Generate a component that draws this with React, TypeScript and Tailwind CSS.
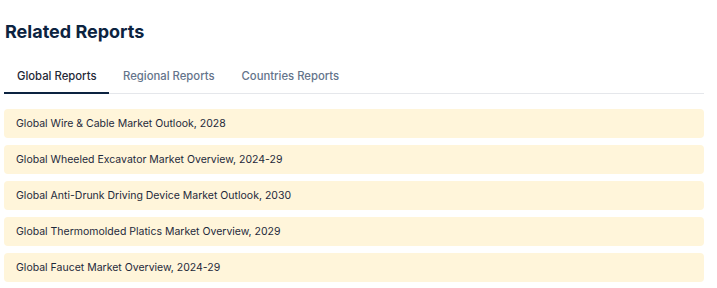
import React, { useState } from "react";

const reports = [
  "Global Wire & Cable Market Outlook, 2028",
  "Global Wheeled Excavator Market Overview, 2024-29",
  "Global Anti-Drunk Driving Device Market Outlook, 2030",
  "Global Thermomolded Platics Market Overview, 2029",
  "Global Faucet Market Overview, 2024-29",
];

const tabs = ["Global Reports", "Regional Reports", "Countries Reports"];

export default function App() {
  const [active, setActive] = useState(0);

  return (
    <div className="w-[717px] h-[288px] bg-white px-[4px] pt-[20px] font-['Inter',sans-serif] overflow-hidden">
      <h2 className="pl-[1px] text-[18px] leading-[24px] font-bold text-[#0c2340]">
        Related Reports
      </h2>

      <div className="mt-[17px] mr-[9px] flex border-b border-[#e5e7eb]">
        {tabs.map((tab, i) => (
          <button
            key={tab}
            onClick={() => setActive(i)}
            className={
              i === active
                ? "-mb-px px-[13px] pt-[8px] pb-[9px] text-[11.3px] leading-[14px] font-medium text-[#1f2937] border-b-2 border-[#0c2340]"
                : "-mb-px px-[13.5px] pt-[8px] pb-[9px] text-[11.3px] leading-[14px] font-medium text-[#64748b] border-b-2 border-transparent"
            }
          >
            {tab}
          </button>
        ))}
      </div>

      <ul className="mt-[15px] mr-[9px] flex flex-col gap-[7px]">
        {reports.map((r) => (
          <li
            key={r}
            className="h-[29px] flex items-center px-[12px] rounded-[4px] bg-[#fff5da] text-[10.5px] text-[#1e293b]"
          >
            {r}
          </li>
        ))}
      </ul>
    </div>
  );
}
